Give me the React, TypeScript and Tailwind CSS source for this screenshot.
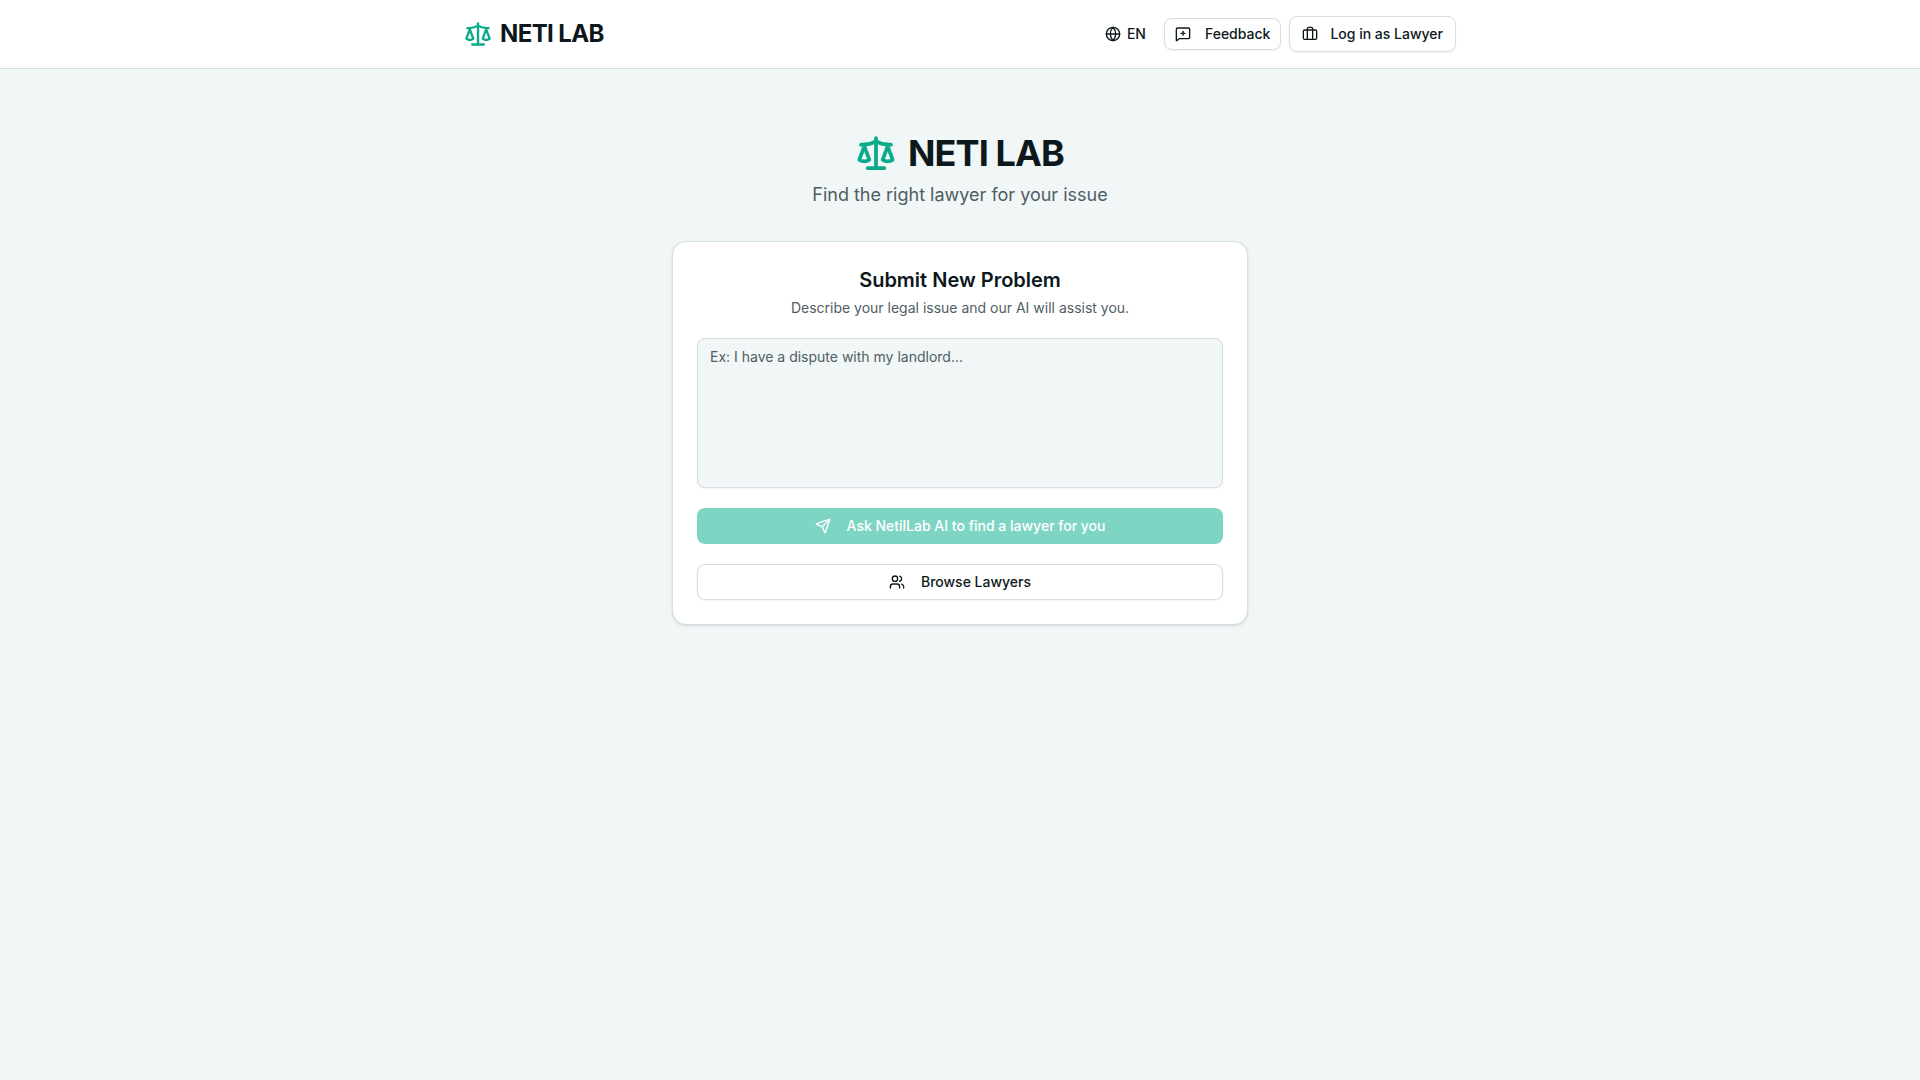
import type { ReactNode } from "react";
import { Briefcase, Globe, MessageSquarePlus, Scale, Send, Users } from "lucide-react";

function OutlineButton({ className, children }: { className: string; children: ReactNode }) {
  return (
    <button
      type="button"
      className={`flex items-center justify-center rounded-lg border border-[#d5dfe1] bg-white text-sm font-medium shadow-xs ${className}`}
    >
      {children}
    </button>
  );
}

export default function App() {
  return (
    <div className="flex min-h-screen flex-col bg-[#f1f6f6] font-['Inter',sans-serif] text-[#0c181c]">
      <header className="border-b border-[#d5dfe1] bg-white">
        <div className="mx-auto flex w-full max-w-[992px] items-center justify-between py-4">
          <a href="#" className="flex items-center gap-2">
            <Scale className="size-7 text-[#0aab8a]" />
            <span className="text-2xl font-bold tracking-tight">NETI LAB</span>
          </a>
          <nav className="flex items-center gap-2">
            <button type="button" className="flex h-8 items-center gap-1.5 px-2.5 text-sm font-medium">
              <Globe className="size-4" />
              EN
            </button>
            <OutlineButton className="h-8 gap-3.5 px-2.5">
              <MessageSquarePlus className="size-4" />
              Feedback
            </OutlineButton>
            <OutlineButton className="h-9 gap-3 px-3">
              <Briefcase className="size-4" />
              Log in as Lawyer
            </OutlineButton>
          </nav>
        </div>
      </header>
      <main className="flex flex-col items-center px-4 pt-16">
        <h1 className="flex items-center gap-3 text-4xl font-bold tracking-tight">
          <Scale strokeWidth={2.25} className="size-10 text-[#0aab8a]" />
          NETI LAB
        </h1>
        <p className="mt-2 text-lg text-[#4f5d64]">Find the right lawyer for your issue</p>
        <section className="mt-8 w-full max-w-xl rounded-[14px] border border-[#d5dfe1] bg-white p-6 shadow-sm">
          <h2 className="text-center text-xl font-semibold">Submit New Problem</h2>
          <label htmlFor="problem" className="mt-1 block text-center text-sm text-[#4f5d64]">
            Describe your legal issue and our AI will assist you.
          </label>
          <textarea
            id="problem"
            placeholder="Ex: I have a dispute with my landlord..."
            className="mt-5 block h-[150px] w-full resize-none rounded-lg border border-[#d5dfe1] bg-[#f1f6f6] px-3 py-2 text-sm shadow-xs placeholder:text-[#4f5d64]"
          />
          <button
            type="button"
            className="mt-5 flex h-9 w-full items-center justify-center gap-4 rounded-lg bg-[#7fd5c4] text-sm font-medium text-white"
          >
            <Send className="size-4" />
            Ask NetilLab AI to find a lawyer for you
          </button>
          <OutlineButton className="mt-5 h-9 w-full gap-4">
            <Users className="size-4" />
            Browse Lawyers
          </OutlineButton>
        </section>
      </main>
    </div>
  );
}
